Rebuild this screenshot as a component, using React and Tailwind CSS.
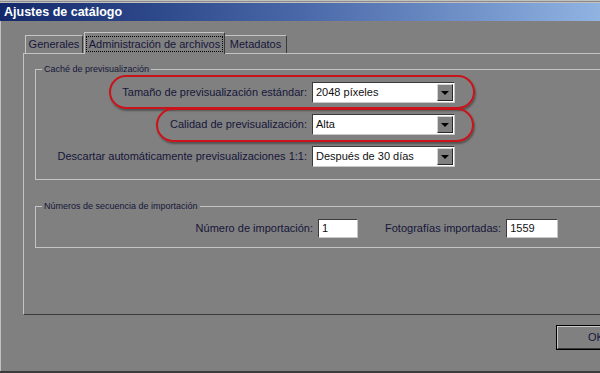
import React from 'react'

const font = { fontFamily: '"Liberation Sans", Arial, sans-serif' }

function Combo({ value }) {
  return (
    <div className="flex h-[21px] w-[143px] border border-t-[#3a3a3a] border-l-[#3a3a3a] border-r-[#c8c8c8] border-b-[#c8c8c8] bg-white">
      <div className="flex flex-1 items-center px-[3px] text-[#111]">{value}</div>
      <div className="m-[1px] flex w-[16px] items-center justify-center border border-t-[#d4d4d4] border-l-[#d4d4d4] border-r-[#2a2a2a] border-b-[#2a2a2a] bg-[#808080]">
        <div className="h-0 w-0 border-x-[4px] border-t-[4px] border-x-transparent border-t-black" />
      </div>
    </div>
  )
}

function Field({ value, width }) {
  return (
    <div
      className={`flex h-[19px] items-center border border-t-[#3a3a3a] border-l-[#3a3a3a] border-r-[#c8c8c8] border-b-[#c8c8c8] bg-white px-[3px] text-[#111] ${width}`}
    >
      {value}
    </div>
  )
}

export default function App() {
  return (
    <div
      className="relative flex h-[373px] w-[600px] flex-col overflow-hidden border-b-2 border-[#3c3c3c] bg-[#808080] text-[11px] text-[#16163a]"
      style={font}
    >
      {/* window frame top */}
      <div className="h-[3px] border-t border-b border-[#c0c0c0] bg-[#8a8a8a]" />

      {/* title bar */}
      <div className="flex h-[18px] items-center bg-gradient-to-r from-[#13286a] via-[#4a68a8] to-[#91b3e2] pl-[4px] text-[12.5px] font-bold text-white">
        Ajustes de catálogo
      </div>

      <div className="flex flex-1 flex-col border-l border-[#c0c0c0] pl-[22px] pt-[11px]">
        {/* tabs */}
        <div className="flex h-[21px] items-end whitespace-nowrap pl-[2px]">
          <div className="flex h-[18px] w-[58px] items-center justify-center border-t border-l border-r border-t-[#c4c4c4] border-l-[#c4c4c4] border-r-[#3a3a3a]">
            Generales
          </div>
          <div className="relative z-10 -mb-[1px] ml-[1px] flex h-[22px] w-[141px] items-center justify-center border-t border-l border-r border-t-[#c4c4c4] border-l-[#c4c4c4] border-r-[#3a3a3a] bg-[#808080]">
            <span className="px-[2px] leading-[14px] outline outline-1 outline-dotted outline-black">
              Administración de archivos
            </span>
          </div>
          <div className="flex h-[18px] w-[62px] items-center justify-center border-t border-r border-t-[#c4c4c4] border-r-[#3a3a3a]">
            Metadatos
          </div>
        </div>

        {/* panel */}
        <div className="h-[262px] w-[640px] border-t border-l border-b border-t-[#c4c4c4] border-l-[#c4c4c4] border-b-[#3a3a3a] pl-[11px] pt-[9px]">
          <fieldset className="h-[117px] border border-[#c4c4c4]">
            <legend className="ml-[6px] px-[2px] text-[9px] leading-[12px]">Caché de previsualización</legend>
            <div className="mt-[7px] flex flex-col gap-[11px]">
              <div className="flex items-center gap-[5px]">
                <div className="w-[271px] text-right">Tamaño de previsualización estándar:</div>
                <Combo value="2048 píxeles" />
              </div>
              <div className="flex items-center gap-[5px]">
                <div className="w-[271px] text-right">Calidad de previsualización:</div>
                <Combo value="Alta" />
              </div>
              <div className="flex items-center gap-[5px]">
                <div className="w-[271px] text-right">Descartar automáticamente previsualizaciones 1:1:</div>
                <Combo value="Después de 30 días" />
              </div>
            </div>
          </fieldset>

          <fieldset className="mt-[20px] h-[48px] border border-[#c4c4c4]">
            <legend className="ml-[6px] px-[2px] text-[9px] leading-[12px]">Números de secuencia de importación</legend>
            <div className="mt-[7px] flex items-center">
              <div className="w-[277px] text-right">Número de importación:</div>
              <div className="ml-[5px]">
                <Field value="1" width="w-[40px]" />
              </div>
              <div className="ml-[27px]">Fotografías importadas:</div>
              <div className="ml-[5px]">
                <Field value="1559" width="w-[52px]" />
              </div>
            </div>
          </fieldset>
        </div>

        {/* buttons */}
        <div className="mt-[10px] pl-[533px]">
          <div className="flex h-[25px] w-[80px] items-center justify-center border border-black">
            <div className="flex h-full w-full items-center justify-center border border-t-[#c8c8c8] border-l-[#c8c8c8] border-r-[#3a3a3a] border-b-[#3a3a3a]">
              OK
            </div>
          </div>
        </div>
      </div>

      {/* red highlight ellipses */}
      <div className="pointer-events-none absolute left-[109px] top-[75px] h-[34px] w-[366px] rounded-full border-2 border-[#c8141a] shadow-[1px_2px_2px_rgba(0,0,0,0.35)]" />
      <div className="pointer-events-none absolute left-[156px] top-[108px] h-[34px] w-[318px] rounded-full border-2 border-[#c8141a] shadow-[1px_2px_2px_rgba(0,0,0,0.35)]" />
    </div>
  )
}
